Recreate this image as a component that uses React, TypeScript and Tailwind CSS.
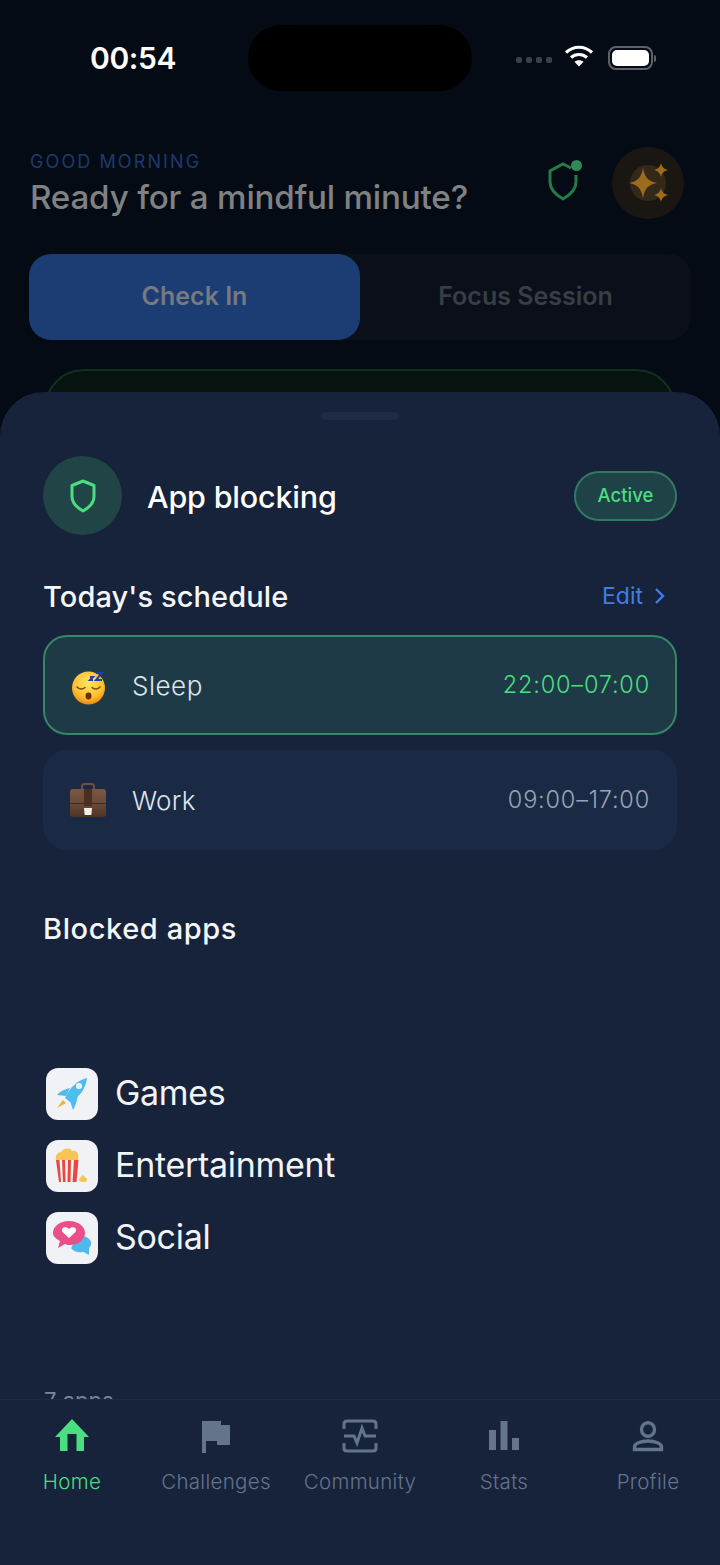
import React from "react";

const font = { fontFamily: '"Inter", "Noto Sans", sans-serif' };

function Wifi() {
  return (
    <svg width="30" height="24" viewBox="0 0 30 24" fill="none" stroke="#fff" strokeWidth="3.2">
      <path d="M2 8.500C9.500 1.500 20.500 1.500 28 8.500" />
      <path d="M7 13.500C11.500 9.500 18.500 9.500 23 13.500" />
      <path d="M15 22.500l-4.600-4.800c2.600-2.100 6.600-2.100 9.200 0z" fill="#fff" stroke="none" />
    </svg>
  );
}

function Sleepy() {
  return (
    <svg width="36" height="36" viewBox="0 0 36 36">
      <defs>
        <radialGradient id="sl" cx="50%" cy="35%" r="65%">
          <stop offset="0%" stopColor="#ffe566" />
          <stop offset="70%" stopColor="#fdbf2d" />
          <stop offset="100%" stopColor="#f0860f" />
        </radialGradient>
      </defs>
      <circle cx="17.500" cy="19" r="16.500" fill="url(#sl)" />
      <path d="M6 18c2 2.500 6 2.500 8 .500M21 18.500c2 2 6 2 8-.500" stroke="#7a4a10" strokeWidth="1.500" fill="none" strokeLinecap="round" />
      <ellipse cx="17.500" cy="27" rx="3" ry="3.400" fill="#6b2f10" />
      <path d="M19 8h3l-3 3h3M25 4h6l-6 7h6" stroke="#1e3fa8" strokeWidth="2" fill="none" />
    </svg>
  );
}

function Briefcase() {
  return (
    <svg width="38" height="36" viewBox="0 0 38 36">
      <defs>
        <linearGradient id="bc" x1="0" y1="0" x2="0" y2="1">
          <stop offset="0%" stopColor="#7a5843" />
          <stop offset="55%" stopColor="#6a4836" />
          <stop offset="100%" stopColor="#4e3426" />
        </linearGradient>
      </defs>
      <path d="M13 8V4.500C13 3 14 2 15.500 2h7C24 2 25 3 25 4.500V8" stroke="#6b5040" strokeWidth="2" fill="none" />
      <rect x="1" y="7" width="36" height="28" rx="3" fill="url(#bc)" />
      <path d="M1 21.500h36" stroke="#3f2a1e" strokeWidth="1" />
      <rect x="15" y="7" width="8" height="17" fill="#4a3022" />
      <path d="M15 26h8l-.500 6c0 .500-.500 1-1 1h-5c-.500 0-1-.500-1-1z" fill="#f2efe9" />
    </svg>
  );
}

function Rocket() {
  return (
    <svg width="36" height="36" viewBox="0 0 36 36">
      <path d="M9 24l3 3-9 5z" fill="#e8b53a" />
      <path d="M16 12C11 13 6 15 3 19l9 1zM24 19c-1 5-2 10-5 15l-3-9z" fill="#4fbcef" />
      <path d="M33 2C24 4 16 11 11 22l5 4C26 21 32 12 33 2z" fill="#4fbcef" />
      <circle cx="25" cy="10" r="3" fill="#f3f4f8" />
    </svg>
  );
}

function Popcorn() {
  return (
    <svg width="36" height="38" viewBox="0 0 36 38">
      <path d="M2 13C1 8 4 5 7 5c2-4 9-5 11-1 4-1 8 2 6 9z" fill="#f6c558" />
      <path d="M2 13h3.500l1.500 22H5zM8 13h3l.500 22H9zM14 13h3l-.500 22H13.500zM20 13h4.500L22.500 35H18.500z" fill="#e8483f" />
      <path d="M29 35c-2.500 0-4-1-4-2.500s2.500-2 3.500-5c1.500 2.500 4.500 3 4.500 5S31.500 35 29 35z" fill="#f6c558" />
    </svg>
  );
}

function Chat() {
  return (
    <svg width="40" height="40" viewBox="0 0 40 40">
      <path d="M26 17c6 0 12 3 13 7 .500 3-1 5-2 6v7c-3-1-4-3-6-3-6 1-10-1-12-4z" fill="#4fb9ec" />
      <path d="M17 3c9 0 16 5 16 12s-7 12-15 12c-2 0-3 0-5-1l-7 4 2-7c-3-2-7-4-7-8C1 8 8 3 17 3z" fill="#e9508a" />
      <path d="M17 20l-6.500-6c-2.500-4 3.500-6.500 6.500-3 3-3.500 9-1 6.500 3z" fill="#fff" />
    </svg>
  );
}

function AppRow({ icon, label }: { icon: React.ReactNode; label: string }) {
  return (
    <div className="flex h-[52px] items-center gap-[18px]">
      <div className="flex h-[52px] w-[52px] items-center justify-center rounded-xl bg-[#f1f2f6]">{icon}</div>
      <span className="-ml-[1px] pb-[4px] text-[34px] tracking-[-0.3px] text-[#f2f3f5]">{label}</span>
    </div>
  );
}

function HomeIcon() {
  return (
    <svg width="36" height="36" viewBox="0 0 36 36" fill="#4ade80">
      <path d="M18 1L1 19h5v14h7.500V16h9v17H30V19h5z" />
    </svg>
  );
}
function FlagIcon() {
  return (
    <svg width="36" height="36" viewBox="0 0 36 36" fill="#64748b">
      <path d="M4 3h19v4h9v20H19v-4H8v12H4z" />
    </svg>
  );
}
function PulseIcon() {
  return (
    <svg width="36" height="36" viewBox="0 0 36 36" fill="none" stroke="#64748b" strokeWidth="3">
      <path d="M2 11V6c0-2 1-3 3-3h26c2 0 3 1 3 3v5M2 25v5c0 2 1 3 3 3h26c2 0 3-1 3-3v-5" />
      <path d="M2 18h10l3 7 5-15 3 8h11" />
    </svg>
  );
}
function BarsIcon() {
  return (
    <svg width="36" height="36" viewBox="0 0 36 36" fill="#64748b">
      <rect x="3" y="12" width="7" height="20" />
      <rect x="14.500" y="3" width="7" height="29" />
      <rect x="26" y="20" width="7" height="12" />
    </svg>
  );
}
function UserIcon() {
  return (
    <svg width="36" height="36" viewBox="0 0 36 36" fill="none" stroke="#64748b" strokeWidth="3.400">
      <ellipse cx="18" cy="11.500" rx="6.500" ry="6.800" />
      <path d="M4.500 31.500V29c0-3.500 6-6 13.500-6s13.500 2.500 13.500 6v2.500z" />
    </svg>
  );
}

function NavItem({ icon, label, active }: { icon: React.ReactNode; label: string; active?: boolean }) {
  return (
    <div className="flex flex-col items-center gap-[15px]">
      {icon}
      <span className={`text-[20.500px] font-light leading-[26px] tracking-[0.3px] ${active ? "text-[#4ade80]" : "text-[#64748b]"}`}>{label}</span>
    </div>
  );
}

export default function App() {
  return (
    <div style={font} className="relative h-[1565px] w-[720px] overflow-hidden bg-[#050b15]">
      {/* status bar */}
      <div className="flex h-[91px] items-start pt-[25px]">
        <div className="flex h-[66px] w-[248px] items-center pl-[90px]">
          <span className="text-[30px] font-semibold leading-none tracking-[-0.4px] text-white">00:54</span>
        </div>
        <div className="h-[66px] w-[224px] rounded-full bg-black" />
        <div className="flex h-[66px] items-center pl-[44px]">
          <div className="mt-[3px] flex gap-[4px]">
            <i className="h-[6px] w-[6px] rounded-[2px] bg-[#3d4048]" />
            <i className="h-[6px] w-[6px] rounded-[2px] bg-[#3d4048]" />
            <i className="h-[6px] w-[6px] rounded-[2px] bg-[#3d4048]" />
            <i className="h-[6px] w-[6px] rounded-[2px] bg-[#3d4048]" />
          </div>
          <div className="ml-[12px] flex -translate-y-[2px]"><Wifi /></div>
          <div className="ml-[14px] flex h-[24px] w-[45px] items-center justify-center rounded-[8px] border-2 border-[#5f6268]">
            <div className="h-[16px] w-[37px] rounded-[5px] bg-white" />
          </div>
          <div className="ml-[1px] h-[7px] w-[2px] rounded-r-full bg-[#5f6268]" />
        </div>
      </div>

      {/* greeting */}
      <div className="mt-[56px] flex items-start justify-between pl-[30px] pr-[36px]">
        <div>
          <div className="mt-[1px] text-[18px] leading-[28px] tracking-[2.100px] text-[#1c3a6e]">GOOD MORNING</div>
          <div className="text-[33.200px] font-medium leading-[42px] tracking-[-0.2px] text-[#7f8183]">Ready for a mindful minute?</div>
        </div>
        <div className="flex items-center gap-[32px]">
          <div className="relative mt-[-2px] h-[42px] w-[34px]">
            <svg width="34" height="42" viewBox="0 0 34 42" fill="none" stroke="#257a4a" strokeWidth="3">
              <path d="M25 7L17 3 4 10v11c0 8 6 13 13 17 7-4 13-9 13-17v-7" />
            </svg>
            <div className="absolute right-[-2px] top-[-1px] h-[11px] w-[11px] rounded-full bg-[#2f8a58]" />
          </div>
          <svg width="72" height="72" viewBox="0 0 72 72">
            <circle cx="36" cy="36" r="36" fill="#1a1713" />
            <circle cx="36" cy="36" r="18" fill="#33281a" />
            <g fill="#9c6b1c">
              <path d="M31 21c2 10 5 13 14 15-9 2-12 5-14 15-2-10-5-13-14-15 9-2 12-5 14-15z" />
              <path d="M49 16c1 4 3 6 7 7-4 1-6 3-7 7-1-4-3-6-7-7 4-1 6-3 7-7z" />
              <path d="M49 41c1 4 3 6 7 7-4 1-6 3-7 7-1-4-3-6-7-7 4-1 6-3 7-7z" />
            </g>
          </svg>
        </div>
      </div>

      {/* tabs */}
      <div className="mx-[29px] mt-[35px] flex h-[86px] rounded-[22px] bg-[#0a0f1a]">
        <div className="flex w-[331px] items-center justify-center rounded-[22px] bg-[#1c3d73] text-[25px] font-semibold text-[#757a83]">Check In</div>
        <div className="flex flex-1 items-center justify-center text-[25px] font-semibold text-[#393d45]">Focus Session</div>
      </div>

      {/* card underneath */}
      <div className="mx-[44px] mt-[29px] h-[100px] rounded-[40px] border-2 border-[#12301f] bg-[#06130f]" />

      {/* sheet */}
      <div className="absolute inset-x-0 bottom-0 top-[392px] flex flex-col overflow-hidden rounded-t-[44px] bg-[#16233b]">
        <div className="mx-auto mt-[20px] h-[8px] w-[78px] shrink-0 rounded-full bg-[#1d2b45]" />
        <div className="min-h-0 flex-1 overflow-hidden px-[43px]">
          <div className="mt-[36px] flex items-center justify-between">
            <div className="flex items-center gap-[25px]">
              <div className="flex h-[79px] w-[79px] items-center justify-center rounded-full bg-[#214447]">
                <svg width="28" height="34" viewBox="0 0 28 34" fill="none" stroke="#4ade80" strokeWidth="3" strokeLinejoin="round">
                  <path d="M14 2l11 4.500V18c0 6-5 10.500-11 14C8 28.500 3 24 3 18V6.500z" />
                </svg>
              </div>
              <span className="mt-[3px] text-[30.500px] font-medium tracking-[-0.2px] text-white">App blocking</span>
            </div>
            <div className="flex h-[50px] w-[103px] items-center justify-center rounded-full border-2 border-[#307a61] bg-[#1f4249] text-[18.500px] font-medium text-[#4ade80]">Active</div>
          </div>

          <div className="mt-[39px] flex h-[44px] items-center justify-between">
            <span className="mt-[1px] text-[29px] font-medium tracking-[0.1px] text-[#f5f6f8]">Today's schedule</span>
            <div className="flex items-center gap-[11px] pr-[11px]">
              <span className="text-[23px] text-[#3f7fe8]">Edit</span>
              <svg width="12" height="18" viewBox="0 0 12 18" fill="none" stroke="#3f7fe8" strokeWidth="2.400"><path d="M2 2l7 7-7 7" /></svg>
            </div>
          </div>

          <div className="mt-[17px] flex h-[100px] items-center rounded-[24px] border-2 border-[#378766] bg-[#1f3a47] pl-[26px] pr-[25px]">
            <div className="mt-[3px] flex w-[36px] justify-center"><Sleepy /></div>
            <span className="ml-[25px] flex-1 text-[26px] font-light tracking-[0.5px] text-[#dfe5ec]">Sleep</span>
            <span className="text-[23.500px] font-light tracking-[0.8px] text-[#4ade80]">22:00–07:00</span>
          </div>

          <div className="mt-[15px] flex h-[100px] items-center rounded-[24px] bg-[#1a2a45] pl-[26px] pr-[27px]">
            <div className="flex w-[38px] justify-center"><Briefcase /></div>
            <span className="ml-[25px] flex-1 text-[26px] font-light tracking-[0.3px] text-[#dfe5ec]">Work</span>
            <span className="text-[23.500px] font-light tracking-[0.8px] text-[#98a4b5]">09:00–17:00</span>
          </div>

          <div className="mt-[57px] text-[29px] font-medium leading-[44px] tracking-[0.6px] text-[#f5f6f8]">Blocked apps</div>

          <div className="ml-[3px] mt-[117px] flex flex-col gap-[20px]">
            <AppRow icon={<Rocket />} label="Games" />
            <AppRow icon={<Popcorn />} label="Entertainment" />
            <AppRow icon={<Chat />} label="Social" />
          </div>

          <div className="ml-[1px] mt-[122px] text-[22px] leading-[28px] text-[#7b8699]">7 apps</div>
        </div>

        {/* bottom nav */}
        <div className="grid h-[166px] shrink-0 grid-cols-5 border-t border-[#1d2b45] bg-[#16233b] pt-[18px]">
          <NavItem icon={<HomeIcon />} label="Home" active />
          <NavItem icon={<FlagIcon />} label="Challenges" />
          <NavItem icon={<PulseIcon />} label="Community" />
          <NavItem icon={<BarsIcon />} label="Stats" />
          <NavItem icon={<UserIcon />} label="Profile" />
        </div>
      </div>
    </div>
  );
}
